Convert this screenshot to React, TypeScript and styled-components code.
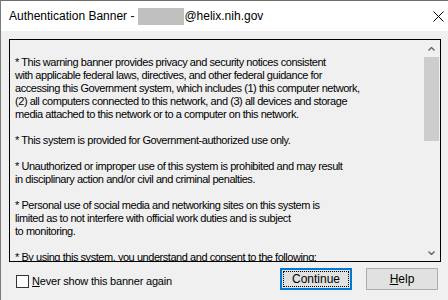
import React from 'react';
import styled, { createGlobalStyle } from 'styled-components';

const GlobalStyle = createGlobalStyle`
  html, body {
    margin: 0;
    padding: 0;
    background: #f0f0f0;
  }
  #root {
    width: 448px;
    height: 300px;
    overflow: hidden;
  }
`;

const Window = styled.div`
  width: 448px;
  height: 300px;
  box-sizing: border-box;
  border-top: 1px solid #6e6e6e;
  border-left: 1px solid #7a7a7a;
  background: #f0f0f0;
  display: flex;
  flex-direction: column;
  font-family: 'Liberation Sans', Arial, sans-serif;
  color: #000;
`;

const TitleBar = styled.div`
  height: 30px;
  background: #fff;
  display: flex;
  align-items: center;
  padding-left: 8px;
  font-size: 12px;
  flex-shrink: 0;
`;

const Title = styled.div`
  display: flex;
  align-items: center;
  flex: 1;
  white-space: nowrap;
`;

const Redacted = styled.span`
  display: inline-block;
  width: 46px;
  height: 17px;
  background: #c0c0c0;
  margin-left: 4px;
`;

const CloseButton = styled.div`
  width: 46px;
  height: 30px;
  display: flex;
  align-items: center;
  justify-content: center;
  margin-right: -13px;
`;

const Body = styled.div`
  flex: 1;
  display: flex;
  flex-direction: column;
  padding: 8px 0 0 8px;
`;

const NoticeBox = styled.div`
  width: 432px;
  height: 223px;
  box-sizing: border-box;
  border: 1px solid #000;
  display: flex;
  background: #f0f0f0;
`;

const NoticeText = styled.div`
  flex: 1;
  overflow: hidden;
  padding: 3px 0 0 5px;
  font-size: 11px;
  letter-spacing: -0.45px;
  line-height: 13px;
  white-space: pre;
`;

const Paragraph = styled.p`
  margin: 13px 0 0;
`;

const Scrollbar = styled.div`
  width: 17px;
  display: flex;
  flex-direction: column;
  background: #f0f0f0;
`;

const ScrollArrow = styled.div`
  height: 17px;
  display: flex;
  align-items: center;
  justify-content: center;
`;

const ScrollTrack = styled.div`
  flex: 1;
  padding: 0 1px;
`;

const ScrollThumb = styled.div`
  height: 84px;
  background: #cdcdcd;
`;

const Footer = styled.div`
  display: flex;
  align-items: center;
  padding: 5px 10px 0 7px;
  height: 24px;
`;

const CheckRow = styled.label`
  display: flex;
  align-items: center;
  font-size: 11px;
  letter-spacing: -0.2px;
  flex: 1;
  margin-top: 4px;
`;

const CheckBox = styled.span`
  width: 11px;
  height: 11px;
  border: 1px solid #333;
  background: #fff;
  margin-right: 3px;
`;

const Key = styled.span`
  text-decoration: underline;
`;

const Button = styled.div<{ $focused?: boolean }>`
  width: 72px;
  height: 22px;
  box-sizing: border-box;
  background: #e1e1e1;
  border: 1px solid ${(p) => (p.$focused ? '#0078d7' : '#adadad')};
  ${(p) => (p.$focused ? 'box-shadow: inset 0 0 0 1px #0078d7;' : '')}
  display: flex;
  align-items: center;
  justify-content: center;
  font-size: 12px;
  margin-left: 14px;
  position: relative;
`;

const FocusRing = styled.span`
  position: absolute;
  inset: 2px;
  border: 1px dotted #000;
`;

const paragraphs = [
  `* This warning banner provides privacy and security notices consistent
with applicable federal laws, directives, and other federal guidance for
accessing this Government system, which includes (1) this computer network,
(2) all computers connected to this network, and (3) all devices and storage
media attached to this network or to a computer on this network.`,
  `* This system is provided for Government-authorized use only.`,
  `* Unauthorized or improper use of this system is prohibited and may result
in disciplinary action and/or civil and criminal penalties.`,
  `* Personal use of social media and networking sites on this system is
limited as to not interfere with official work duties and is subject
to monitoring.`,
  `* By using this system, you understand and consent to the following:`,
];

const App = () => {
  return (
    <>
      <GlobalStyle />
      <Window>
        <TitleBar>
          <Title>
            Authentication Banner -<Redacted />@helix.nih.gov
          </Title>
          <CloseButton>
            <svg width="11" height="11" viewBox="0 0 11 11">
              <path d="M0.5 0.5 L10.5 10.5 M10.5 0.5 L0.5 10.5" stroke="#000" strokeWidth="1" fill="none" />
            </svg>
          </CloseButton>
        </TitleBar>
        <Body>
          <NoticeBox>
            <NoticeText>
              {paragraphs.map((text, i) => (
                <Paragraph key={i}>{text}</Paragraph>
              ))}
            </NoticeText>
            <Scrollbar>
              <ScrollArrow>
                <svg width="7" height="4" viewBox="0 0 7 4">
                  <path d="M0.5 3.5 L3.5 0.5 L6.5 3.5" stroke="#606060" strokeWidth="1.3" fill="none" />
                </svg>
              </ScrollArrow>
              <ScrollTrack>
                <ScrollThumb />
              </ScrollTrack>
              <ScrollArrow>
                <svg width="7" height="4" viewBox="0 0 7 4">
                  <path d="M0.5 0.5 L3.5 3.5 L6.5 0.5" stroke="#606060" strokeWidth="1.3" fill="none" />
                </svg>
              </ScrollArrow>
            </Scrollbar>
          </NoticeBox>
          <Footer>
            <CheckRow>
              <CheckBox />
              <span>
                <Key>N</Key>ever show this banner again
              </span>
            </CheckRow>
            <Button $focused>
              <FocusRing />
              Continue
            </Button>
            <Button>
              <span>
                <Key>H</Key>elp
              </span>
            </Button>
          </Footer>
        </Body>
      </Window>
    </>
  );
};

export default App;
